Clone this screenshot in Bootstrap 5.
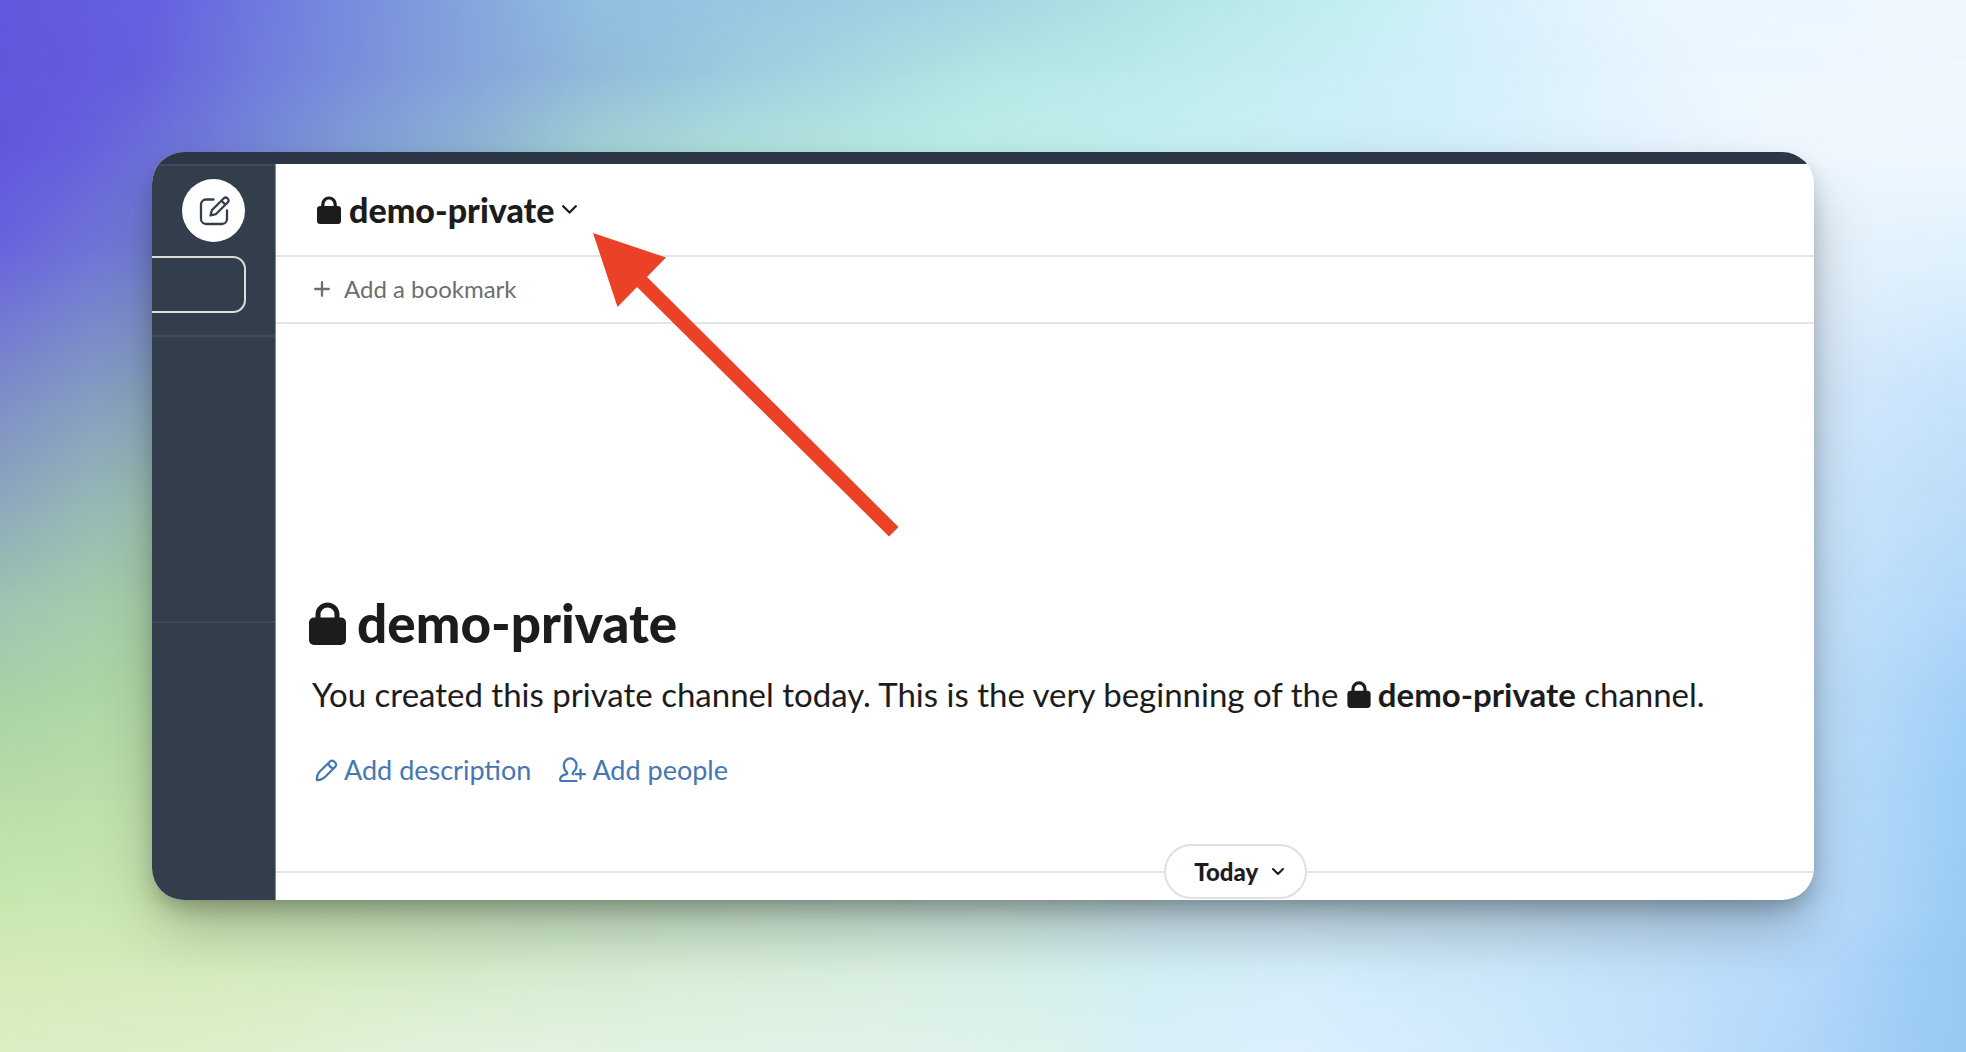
<!DOCTYPE html>
<html lang="en">
<head>
<meta charset="utf-8">
<meta name="viewport" content="width=device-width, initial-scale=1">
<title>demo-private</title>
<link href="https://cdn.jsdelivr.net/npm/bootstrap@5.3.0/dist/css/bootstrap.min.css" rel="stylesheet">
<style>
  body { font-family: Lato, "Open Sans", sans-serif; color: #1d1c1d; background: #c8e2ee; }
  .stage { padding: 152px; isolation: isolate; }

  /* Backdrop: horizontal colour bands, each fading into the one below it */
  .backdrop { inset: 0; z-index: -1; overflow: hidden; }
  .band { position: absolute; inset: 0; -webkit-mask-image: linear-gradient(#000 var(--from), transparent var(--to)); mask-image: linear-gradient(#000 var(--from), transparent var(--to)); }
  .band-1 { --from: 0%; --to: 7%; background: linear-gradient(90deg, #6058dc, #6562e0 8%, #7485de 16%, #82a2dc 23%, #90bee0 30%, #9ccbe2 42%, #a3d6e2 50%, #b3e6e6 60%, #c4f0f2 70%, #d9effd 76%, #e8f6fe 84%, #f0f7ff); }
  .band-2 { --from: 7%; --to: 14%; background: linear-gradient(90deg, #6058dc, #6460dd 7%, #7380dc 14%, #829edb 22%, #90bada 30%, #9dcfe0 38%, #b2e6e4 50%, #bdeced 60%, #cfeffb 72%, #def2fd 80%, #edf7ff 88%, #f0f7ff); }
  .band-3 { --from: 14%; --to: 24%; background: linear-gradient(90deg, #6058dc, #6560dd 4%, #7078d8 10%, #809ed6 18%, #90b8d4 25%, #a0d0d4 30%, #aedfdb 37%, #bbede6 48%, #c5f0f2 60%, #d0effb 72%, #e2f3fe 82%, #f0f8ff 90%, #f0f7ff); }
  .band-4 { --from: 24%; --to: 38%; background: linear-gradient(90deg, #6865dd, #7480d2 8%, #e4f1fb 92%, #e0f2fd); }
  .band-5 { --from: 38%; --to: 48%; background: linear-gradient(90deg, #7e8ec8, #8ca8bc 8%, #d5e8fb 92%, #c6e2fc); }
  .band-6 { --from: 48%; --to: 57%; background: linear-gradient(90deg, #8fa8bc, #9ec3b2 8%, #cce6fc 92%, #bcdcf8); }
  .band-7 { --from: 57%; --to: 67%; background: linear-gradient(90deg, #9dc4b2, #a8d0a8 8%, #c6e3fb 92%, #b1d8fa); }
  .band-8 { --from: 67%; --to: 76%; background: linear-gradient(90deg, #aad3a6, #b3d9a6 8%, #c0e0fb 92%, #a2d0f7); }
  .band-9 { --from: 76%; --to: 86%; background: linear-gradient(90deg, #badca8, #bfe0ac 8%, #b8dcfb 93%, #9ccef5); }
  .band-10 { --from: 86%; --to: 92%; background: linear-gradient(90deg, #c8e8b0, #cbe8b2 9%, #c8e6c4 30%, #cae6dc 50%, #c8e2ee 60%, #c4dff2 75%, #b4d9fb 94%, #9accf3); }
  .band-11 { --from: 92%; --to: 100%; background: linear-gradient(90deg, #d3eab8, #d4ebbc 10%, #d4ebcb 24%, #d8eee0 46%, #d2eef2 58%, #d4edfb 66%, #cae6f8 77%, #b9dbfb 90%, #b0d6fa 93%, #9ccdf4 98%, #98caf2); }
  .band-12 { -webkit-mask-image: none; mask-image: none; background: linear-gradient(90deg, #dcefc4, #dcf0ca 10%, #e2f3dc 22%, #e2f4e8 40%, #ddf3ec 53%, #d8f1f8 58%, #dcf0ff 66%, #d0eafc 76%, #c4e1fc 84%, #b0d7fa 92%, #9fcdf4 97%, #98caf2); }

  .app-window { border-radius: 32px; background: #fff; box-shadow: 0 30px 60px -6px rgba(0, 0, 0, .26), 0 10px 22px -4px rgba(0, 0, 0, .24); }
  .title-strip { height: 12px; background: #2c3647; }

  .side-rail { width: 124px; background: #323e4c; border-right: 1px solid #858b93; }
  .rail-section { border-top: 2px solid #3f4b59; }
  .rail-head { height: 171px; padding: 13px 30px 0 0; }
  .rail-mid { height: 286px; }
  .compose { width: 63px; height: 63px; color: #323e4c; }
  .jump-field { width: 94px; height: 57px; margin-top: 14px; border: 2px solid #deded8; border-left: 0; border-radius: 0 13px 13px 0; background: transparent; color: #fff; }

  .line-b { border-bottom: 2px solid #e4e4e4; }
  .channel-head { padding: 20px 41px; }
  .channel-name { font-size: 34px; line-height: 51px; font-weight: 900; color: inherit; gap: 8px; }
  .bookmark { padding: 16px 38px 17px; }
  .bookmark-add { font-size: 24px; line-height: 32px; color: #6b6f6e; gap: 14px; }
  .intro { padding: 267px 33px 58px; }
  .intro h1 { font-size: 53px; line-height: 64px; font-weight: 900; gap: 11px; margin-bottom: 15px; }
  .intro p { font-size: 33px; line-height: 48px; margin: 0 0 36px 3px; }
  .intro-links { font-size: 27px; line-height: 32px; gap: 28px; margin-left: 6px; }
  .intro-links a { color: #4577b3; gap: 6px; }
  .lock-inline { vertical-align: -1px; margin-right: 7px; }
  .day-line { height: 2px; background: #e4e4e4; }
  .line-before { flex: 7 1 0; }
  .line-after { flex: 4 1 0; }
  .day-pill { width: 143px; height: 55px; border: 2px solid #e0e0e0; font-size: 24px; font-weight: 900; color: inherit; gap: 14px; padding-left: 20px; padding-right: 12px; }
  .pointer-arrow { top: 64px; left: 312px; pointer-events: none; }
</style>
</head>
<body>
<svg class="d-none">
  <symbol id="lock" viewBox="0 0 37 43">
    <path d="M9 18V12.500a9.500 9.500 0 0 1 19 0V18" fill="none" stroke="currentColor" stroke-width="5"/>
    <rect y="15.500" width="37" height="27.500" rx="5" fill="currentColor"/>
  </symbol>
</svg>

<div class="stage position-relative d-flex min-vh-100">
  <div class="backdrop position-absolute" aria-hidden="true">
    <div class="band band-12"></div>
    <div class="band band-11"></div>
    <div class="band band-10"></div>
    <div class="band band-9"></div>
    <div class="band band-8"></div>
    <div class="band band-7"></div>
    <div class="band band-6"></div>
    <div class="band band-5"></div>
    <div class="band band-4"></div>
    <div class="band band-3"></div>
    <div class="band band-2"></div>
    <div class="band band-1"></div>
  </div>

  <div class="app-window d-flex flex-column flex-grow-1 overflow-hidden">
    <div class="title-strip flex-shrink-0"></div>
    <div class="d-flex flex-grow-1">
    <aside class="side-rail flex-shrink-0">
      <div class="rail-section rail-head d-flex flex-column align-items-end">
        <button type="button" class="compose btn bg-white rounded-circle p-0 d-flex align-items-center justify-content-center flex-shrink-0" aria-label="New message">
          <svg width="32" height="32" viewBox="0 0 32 32" fill="none" stroke="currentColor" stroke-width="2.300" stroke-linecap="round" stroke-linejoin="round">
            <path d="M15.500 4.500H8A5 5 0 0 0 3 9.500V24a5 5 0 0 0 5 5h16a5 5 0 0 0 5-5v-8.500"/>
            <path d="M12.500 20.500l1.300-5.200L25.600 3.500a2.800 2.800 0 0 1 4 4L17.800 19.200zM23.500 5.800l3.800 3.800"/>
          </svg>
        </button>
        <input type="text" class="jump-field align-self-start flex-shrink-0" aria-label="Search">
      </div>
      <div class="rail-section rail-mid"></div>
      <div class="rail-section"></div>
    </aside>

    <main class="position-relative flex-grow-1">
      <header class="channel-head line-b d-flex">
        <button type="button" class="channel-name btn border-0 p-0 d-flex align-items-center">
          <svg width="24" height="28" aria-hidden="true"><use href="#lock"/></svg>
          <span>demo-private</span>
          <svg width="15" height="9" viewBox="0 0 15 9" fill="none" stroke="currentColor" stroke-width="2.300" stroke-linecap="round" stroke-linejoin="round" aria-hidden="true"><path d="M1.200 1.200l6.300 6.300 6.300-6.300"/></svg>
        </button>
      </header>

      <div class="bookmark line-b d-flex">
        <button type="button" class="bookmark-add btn border-0 p-0 d-flex align-items-center">
          <svg width="16" height="16" viewBox="0 0 16 16" stroke="currentColor" stroke-width="2.300" stroke-linecap="round" aria-hidden="true"><path d="M1.200 8h13.600M8 1.200v13.600"/></svg>
          <span>Add a bookmark</span>
        </button>
      </div>

      <section class="intro">
        <h1 class="d-flex align-items-center">
          <svg width="37" height="43" aria-hidden="true"><use href="#lock"/></svg>
          <span>demo-private</span>
        </h1>
        <p>You created this private channel today. This is the very beginning of the <svg class="lock-inline" width="24" height="27" aria-hidden="true"><use href="#lock"/></svg><strong>demo-private</strong> channel.</p>
        <div class="intro-links d-flex">
          <a href="#" class="d-flex align-items-center text-decoration-none">
            <svg width="23" height="23" viewBox="0 0 23 23" fill="none" stroke="currentColor" stroke-width="2.200" stroke-linecap="round" stroke-linejoin="round" aria-hidden="true">
              <path d="M2 21q-.6-4.500 2.300-8L15 2.500a2.800 2.800 0 0 1 4 0l1.300 1.300a2.800 2.800 0 0 1 0 4L10 18q-3.500 3.400-8 3zM13.500 4.500q.8 3.800 5 5"/>
            </svg>
            <span>Add description</span>
          </a>
          <a href="#" class="d-flex align-items-center text-decoration-none">
            <svg width="27" height="26" viewBox="0 0 27 26" fill="none" stroke="currentColor" stroke-width="2.200" stroke-linecap="round" stroke-linejoin="round" aria-hidden="true">
              <path d="M17.500 24H3q-2.200 0-1.800-2.200.7-3.300 5-4.200 2.700-.6 1.700-2.200C6 13.600 4.900 11 4.900 8.300a6.300 6.900 0 0 1 12.600 0c0 3-1.400 5.500-3.500 7.200q-.9.900.2 1.800M21.500 12.500v9.500M16.800 17.200h9.300"/>
            </svg>
            <span>Add people</span>
          </a>
        </div>
      </section>

      <div class="d-flex align-items-center">
        <div class="day-line line-before"></div>
        <button type="button" class="day-pill btn bg-white rounded-pill flex-shrink-0 py-0 d-flex align-items-center justify-content-center">
          <span>Today</span>
          <svg width="12" height="8" viewBox="0 0 12 8" fill="none" stroke="currentColor" stroke-width="2" stroke-linecap="round" stroke-linejoin="round" aria-hidden="true"><path d="M1 1l5 5 5-5"/></svg>
        </button>
        <div class="day-line line-after"></div>
      </div>

      <svg class="pointer-arrow position-absolute" width="320" height="310" viewBox="0 0 320 310" aria-hidden="true">
        <path d="M5 5L78 29.500 59 49 310.500 299 301 308.500 49 59 29.500 79z" fill="#eb4126"/>
      </svg>
    </main>
    </div>
  </div>
</div>
<script src="https://cdn.jsdelivr.net/npm/bootstrap@5.3.0/dist/js/bootstrap.bundle.min.js"></script>
</body>
</html>
